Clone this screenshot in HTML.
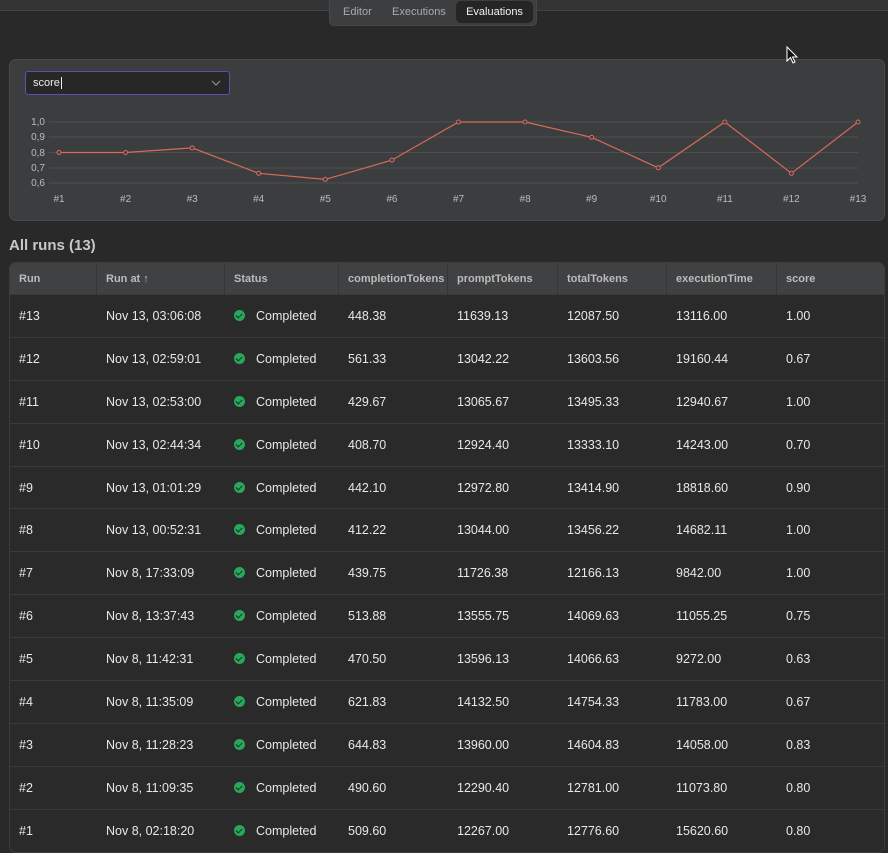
<!DOCTYPE html>
<html><head><meta charset="utf-8"><style>
*{box-sizing:border-box;margin:0;padding:0}
body{width:888px;height:849px;overflow:hidden;background:#292929;font-family:"Liberation Sans",sans-serif;color:#e6e6e6;position:relative}
.top{position:absolute;left:0;top:0;width:888px;height:11px;background:#333436;border-bottom:1px solid #444}
.tabs{position:absolute;left:329px;top:0;width:208px;height:26px;background:#3d3e40;border-radius:0 0 5px 5px;border:1px solid #464749;border-top:none}
.tabs span{position:absolute;top:6px;font-size:11px;color:#aaa}
.tabs .act{left:126px;top:1px;width:77px;height:22px;background:#252526;border-radius:5px;color:#f2f2f2;text-align:center;line-height:22px}
.card{position:absolute;left:9px;top:59px;width:876px;height:162px;background:#3c3d3f;border:1px solid #48494b;border-radius:7px}
.sel{position:absolute;left:15px;top:11px;width:205px;height:24px;background:#272728;border:1px solid #5b4fb0;border-radius:3px;font-size:11px;padding:5px 7px;color:#eee}
h2{position:absolute;left:9px;top:237px;font-size:15px;font-weight:bold;color:#c8c8c8}
table{position:absolute;left:9px;top:262px;width:876px;border-collapse:separate;border-spacing:0;font-size:12.5px;border:1px solid #3c3c3c;border-radius:7px;overflow:hidden}
th{background:#404143;height:31px;text-align:left;font-weight:bold;font-size:11px;color:#bbb;padding-left:9px;border-right:1px solid #353638}
td{height:42.9px;padding-left:9px;border-top:1px solid #3a3a3a;background:#2a2a2a;color:#e8e8e8}
.ck{display:inline-block;width:11px;height:11px;border-radius:50%;background:#27a85a;vertical-align:-1px;margin-right:11px;position:relative}
.ck:after{content:"";position:absolute;left:3px;top:2px;width:3px;height:5px;border:solid #1c2a20;border-width:0 1.5px 1.5px 0;transform:rotate(45deg)}
</style></head><body>
<div class="top"></div>
<div class="tabs"><span style="left:13px">Editor</span><span style="left:62px">Executions</span><span class="act">Evaluations</span></div>
<div class="card"><div class="sel">score<span style="border-left:1px solid #eee;margin-left:1px"></span>
<svg style="position:absolute;right:8px;top:7px" width="10" height="8" viewBox="0 0 10 8"><path d="M1 2l4 4 4-4" fill="none" stroke="#999" stroke-width="1"/></svg></div></div>
<svg style="position:absolute;left:0;top:0" width="888" height="230">
<g stroke="#4e4f52" stroke-width="1">
<line x1="49" x2="858" y1="122" y2="122"/><line x1="49" x2="858" y1="137" y2="137"/><line x1="49" x2="858" y1="152.5" y2="152.5"/><line x1="49" x2="858" y1="168" y2="168"/><line x1="49" x2="858" y1="183" y2="183"/></g>
<g font-size="10" fill="#bbb" font-family="Liberation Sans">
<text x="45" y="125" text-anchor="end">1,0</text><text x="45" y="140" text-anchor="end">0,9</text><text x="45" y="156" text-anchor="end">0,8</text><text x="45" y="171" text-anchor="end">0,7</text><text x="45" y="186" text-anchor="end">0,6</text>
<g text-anchor="middle"><text x="59" y="202">#1</text><text x="125.6" y="202">#2</text><text x="192.2" y="202">#3</text><text x="258.7" y="202">#4</text><text x="325.3" y="202">#5</text><text x="391.9" y="202">#6</text><text x="458.5" y="202">#7</text><text x="525.1" y="202">#8</text><text x="591.6" y="202">#9</text><text x="658.2" y="202">#10</text><text x="724.8" y="202">#11</text><text x="791.4" y="202">#12</text><text x="858" y="202">#13</text></g></g>
<polyline fill="none" stroke="#d86a5a" stroke-width="1.2" points="59,152.5 125.6,152.5 192.2,147.9 258.7,173.3 325.3,179.4 391.9,160.1 458.5,122 525.1,122 591.6,137.3 658.2,167.8 724.8,122 791.4,173.3 858,122"/>
<g fill="#3c3d3f" stroke="#d86a5a" stroke-width="1"><circle cx="59" cy="152.5" r="2"/><circle cx="125.6" cy="152.5" r="2"/><circle cx="192.2" cy="147.9" r="2"/><circle cx="258.7" cy="173.3" r="2"/><circle cx="325.3" cy="179.4" r="2"/><circle cx="391.9" cy="160.1" r="2"/><circle cx="458.5" cy="122" r="2"/><circle cx="525.1" cy="122" r="2"/><circle cx="591.6" cy="137.3" r="2"/><circle cx="658.2" cy="167.8" r="2"/><circle cx="724.8" cy="122" r="2"/><circle cx="791.4" cy="173.3" r="2"/><circle cx="858" cy="122" r="2"/></g>
<path d="M787 47v14l3.5-3.5 2.5 5.5 2-1-2.5-5h4.5z" fill="#111" stroke="#fff" stroke-width="1"/>
</svg>
<h2>All runs (13)</h2>
<table>
<tr><th style="width:87px">Run</th><th style="width:128px">Run at ↑</th><th style="width:114px">Status</th><th style="width:109px">completionTokens</th><th style="width:110px">promptTokens</th><th style="width:109px">totalTokens</th><th style="width:110px">executionTime</th><th style="border-right:none">score</th></tr>
<tr><td>#13</td><td>Nov 13, 03:06:08</td><td><i class="ck"></i>Completed</td><td>448.38</td><td>11639.13</td><td>12087.50</td><td>13116.00</td><td>1.00</td></tr>
<tr><td>#12</td><td>Nov 13, 02:59:01</td><td><i class="ck"></i>Completed</td><td>561.33</td><td>13042.22</td><td>13603.56</td><td>19160.44</td><td>0.67</td></tr>
<tr><td>#11</td><td>Nov 13, 02:53:00</td><td><i class="ck"></i>Completed</td><td>429.67</td><td>13065.67</td><td>13495.33</td><td>12940.67</td><td>1.00</td></tr>
<tr><td>#10</td><td>Nov 13, 02:44:34</td><td><i class="ck"></i>Completed</td><td>408.70</td><td>12924.40</td><td>13333.10</td><td>14243.00</td><td>0.70</td></tr>
<tr><td>#9</td><td>Nov 13, 01:01:29</td><td><i class="ck"></i>Completed</td><td>442.10</td><td>12972.80</td><td>13414.90</td><td>18818.60</td><td>0.90</td></tr>
<tr><td>#8</td><td>Nov 13, 00:52:31</td><td><i class="ck"></i>Completed</td><td>412.22</td><td>13044.00</td><td>13456.22</td><td>14682.11</td><td>1.00</td></tr>
<tr><td>#7</td><td>Nov 8, 17:33:09</td><td><i class="ck"></i>Completed</td><td>439.75</td><td>11726.38</td><td>12166.13</td><td>9842.00</td><td>1.00</td></tr>
<tr><td>#6</td><td>Nov 8, 13:37:43</td><td><i class="ck"></i>Completed</td><td>513.88</td><td>13555.75</td><td>14069.63</td><td>11055.25</td><td>0.75</td></tr>
<tr><td>#5</td><td>Nov 8, 11:42:31</td><td><i class="ck"></i>Completed</td><td>470.50</td><td>13596.13</td><td>14066.63</td><td>9272.00</td><td>0.63</td></tr>
<tr><td>#4</td><td>Nov 8, 11:35:09</td><td><i class="ck"></i>Completed</td><td>621.83</td><td>14132.50</td><td>14754.33</td><td>11783.00</td><td>0.67</td></tr>
<tr><td>#3</td><td>Nov 8, 11:28:23</td><td><i class="ck"></i>Completed</td><td>644.83</td><td>13960.00</td><td>14604.83</td><td>14058.00</td><td>0.83</td></tr>
<tr><td>#2</td><td>Nov 8, 11:09:35</td><td><i class="ck"></i>Completed</td><td>490.60</td><td>12290.40</td><td>12781.00</td><td>11073.80</td><td>0.80</td></tr>
<tr><td>#1</td><td>Nov 8, 02:18:20</td><td><i class="ck"></i>Completed</td><td>509.60</td><td>12267.00</td><td>12776.60</td><td>15620.60</td><td>0.80</td></tr>
</table>
</body></html>
